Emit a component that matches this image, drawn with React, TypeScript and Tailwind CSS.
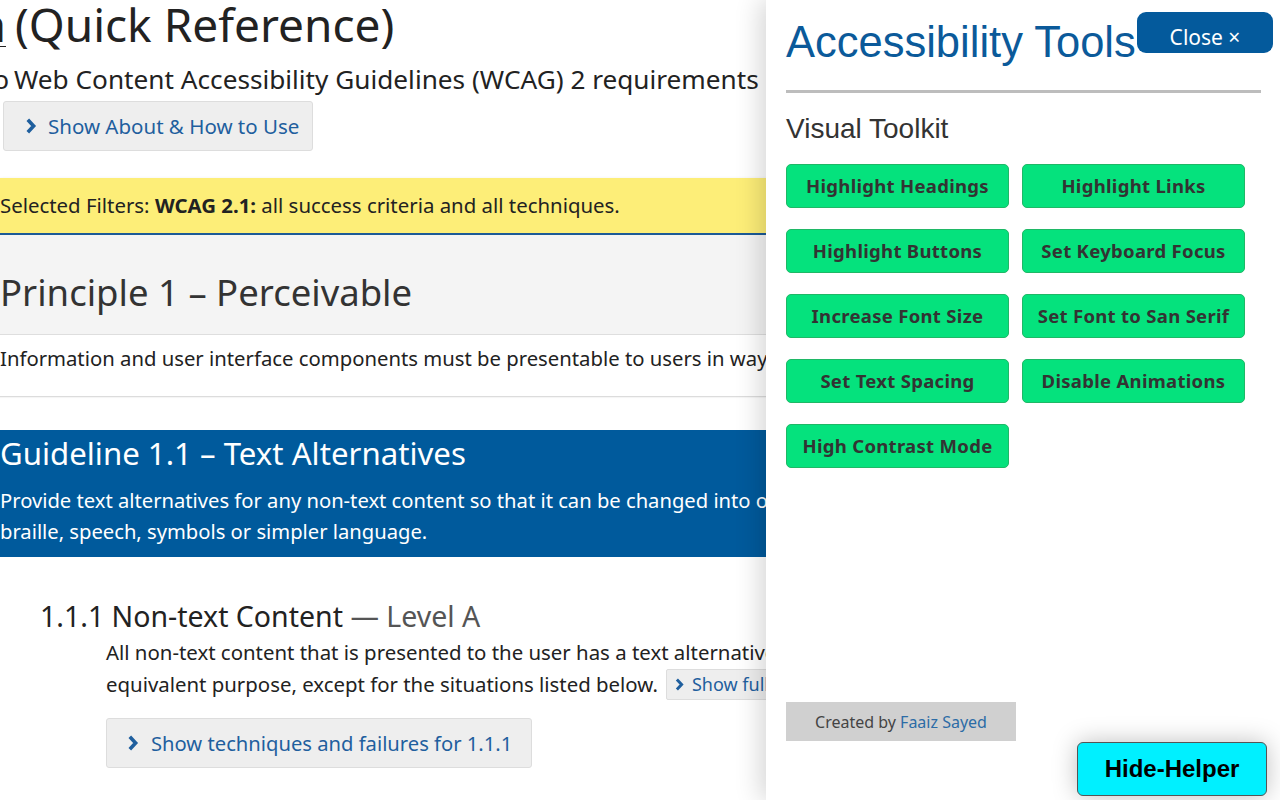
import React from "react";

const noto = "font-['Noto_Sans',sans-serif]";

function Chevron({ className }: { className?: string }) {
  return (
    <svg viewBox="0 0 10 16" className={className} fill="none" stroke="currentColor" strokeWidth="3.6" strokeLinejoin="miter">
      <path d="M1.8 1.8 L7.6 8 L1.8 14.2" />
    </svg>
  );
}

const tools = [
  "Highlight Headings",
  "Highlight Links",
  "Highlight Buttons",
  "Set Keyboard Focus",
  "Increase Font Size",
  "Set Font to San Serif",
  "Set Text Spacing",
  "Disable Animations",
  "High Contrast Mode",
];

export default function App() {
  return (
    <div className={`relative w-[1280px] h-[800px] overflow-hidden bg-white text-[#222] ${noto}`}>
      {/* Page content */}
      <div className="flex flex-col w-[1280px]">
        <h1 className="flex items-center h-[52px] text-[46px] leading-[52px] text-[#222] whitespace-nowrap -mt-[2px]">
          <span className="flex justify-end w-[6px] overflow-hidden">
            <span className="underline decoration-1 underline-offset-4">a</span>
          </span>
          <span className="ml-[9px]">(Quick Reference)</span>
        </h1>
        <p className="flex items-center h-[52px] mt-[4px] text-[26.2px] text-[#222] whitespace-nowrap">
          <span className="flex justify-end w-[9px] overflow-hidden">
            <span>to</span>
          </span>
          <span className="ml-[5px]">Web Content Accessibility Guidelines (WCAG) 2 requirements</span>
        </p>
        <div className="flex mt-[-5px] ml-[3px]">
          <div className="flex items-center gap-[11px] h-[50px] w-[310px] pl-[21px] bg-[#eeeeee] border border-[#dddddd] rounded-[3px] text-[#1f5f9e] text-[20.5px]">
            <Chevron className="w-[12px] h-[16px]" />
            <span>Show About &amp; How to Use</span>
          </div>
        </div>

        <div className="mt-[27px] h-[57px] flex items-center bg-[#fdee78] border-b-2 border-[#1c5a96] shadow-[0_2px_4px_rgba(0,0,0,0.18)] text-[20.4px] whitespace-nowrap">
          <span>
            Selected Filters: <strong className="font-bold">WCAG 2.1:</strong> all success criteria and all techniques.
          </span>
        </div>

        <div className="h-[100px] flex items-center bg-[#f4f4f4] border-b border-[#dedede]">
          <h2 className="text-[36.5px] text-[#333] whitespace-nowrap mt-[16px]">Principle 1 – Perceivable</h2>
        </div>
        <div className="h-[62px] flex items-start border-b border-[#dcdcdc] shadow-[0_1px_1px_rgba(0,0,0,0.04)]">
          <p className="mt-[8px] text-[20.3px] whitespace-nowrap text-[#222]">
            Information and user interface components must be presentable to users in ways they can perceive.
          </p>
        </div>

        <div className="mt-[33px] h-[127px] bg-[#005a9c] text-white flex flex-col pt-[3px]">
          <h3 className="text-[31.2px] leading-[40px] whitespace-nowrap">Guideline 1.1 – Text Alternatives</h3>
          <p className="mt-[12px] text-[20.2px] leading-[31px] whitespace-nowrap">
            Provide text alternatives for any non-text content so that it can be changed into other forms people need, such as large print,
            <br />
            braille, speech, symbols or simpler language.
          </p>
        </div>

        <div className="pl-[40px] pt-[38px]">
          <h4 className="text-[28.5px] leading-[40px] whitespace-nowrap text-[#222] mt-[1px]">
            1.1.1 Non-text Content <span className="text-[#555]">— Level A</span>
          </h4>
        </div>
        <div className="pl-[106px] mt-[0px] text-[20.4px] leading-[32px] text-[#222] whitespace-nowrap">
          <p>All non-text content that is presented to the user has a text alternative that serves the</p>
          <p className="flex items-center">
            <span>equivalent purpose, except for the situations listed below.</span>
            <span className="ml-[8px] flex items-center gap-[8px] h-[31px] px-[8px] bg-[#eeeeee] border border-[#dddddd] rounded-[2px] text-[18px] text-[#1f5f9e]">
              <Chevron className="w-[9px] h-[13px]" />
              Show full description
            </span>
          </p>
          <div className="flex mt-[18px]">
            <div className="flex items-center gap-[12px] h-[50px] w-[426px] pl-[20px] bg-[#eeeeee] border border-[#dddddd] rounded-[3px] text-[#1f5f9e] text-[20.2px]">
              <Chevron className="w-[12px] h-[16px]" />
              <span>Show techniques and failures for 1.1.1</span>
            </div>
          </div>
        </div>
      </div>

      {/* Accessibility panel overlay */}
      <aside className="absolute top-0 right-0 w-[514px] h-[800px] bg-white shadow-[-6px_0_24px_rgba(0,0,0,0.16)] flex flex-col px-[20px]">
        <div className="flex items-start h-[72px]">
          <h2 className="font-['Liberation_Sans',Arial,sans-serif] text-[43.5px] leading-[50px] mt-[17px] text-[#0b5a9a] whitespace-nowrap">
            Accessibility Tools
          </h2>
        </div>
        <button className="absolute top-[12px] right-[7px] w-[136px] h-[41px] rounded-[9px] bg-[#045a9c] text-white text-[21px] leading-[24px] pt-[13px] flex items-start justify-center">
          Close ×
        </button>
        <div className="mt-[18px] w-[475px] h-[3px] bg-[#bdbdbd]" />
        <h3 className="mt-[20px] font-['Liberation_Sans',Arial,sans-serif] text-[28px] leading-[32px] text-[#333]">
          Visual Toolkit
        </h3>
        <div className="mt-[19px] grid grid-cols-[223px_223px] gap-x-[13px] gap-y-[21px]">
          {tools.map((t) => (
            <button
              key={t}
              className="h-[44px] rounded-[5px] bg-[#05e27d] border border-[#1fb866] text-[#333] font-bold text-[18.5px] tracking-[0.3px]"
            >
              {t}
            </button>
          ))}
        </div>
        <div className="flex-1" />
        <div className="mb-[59px] w-[230px] h-[39px] bg-[#d0d0d0] flex items-center justify-center text-[16px] text-[#444]">
          <span>
            Created by <span className="text-[#2c6ca6]">Faaiz Sayed</span>
          </span>
        </div>
      </aside>

      <button className="absolute right-[13px] bottom-[4px] w-[190px] h-[54px] rounded-[6px] bg-[#00f0ff] border border-[#555] shadow-[0_0_24px_rgba(0,0,0,0.25)] font-['Liberation_Sans',Arial,sans-serif] font-bold text-[24px] text-black">
        Hide-Helper
      </button>
    </div>
  );
}
